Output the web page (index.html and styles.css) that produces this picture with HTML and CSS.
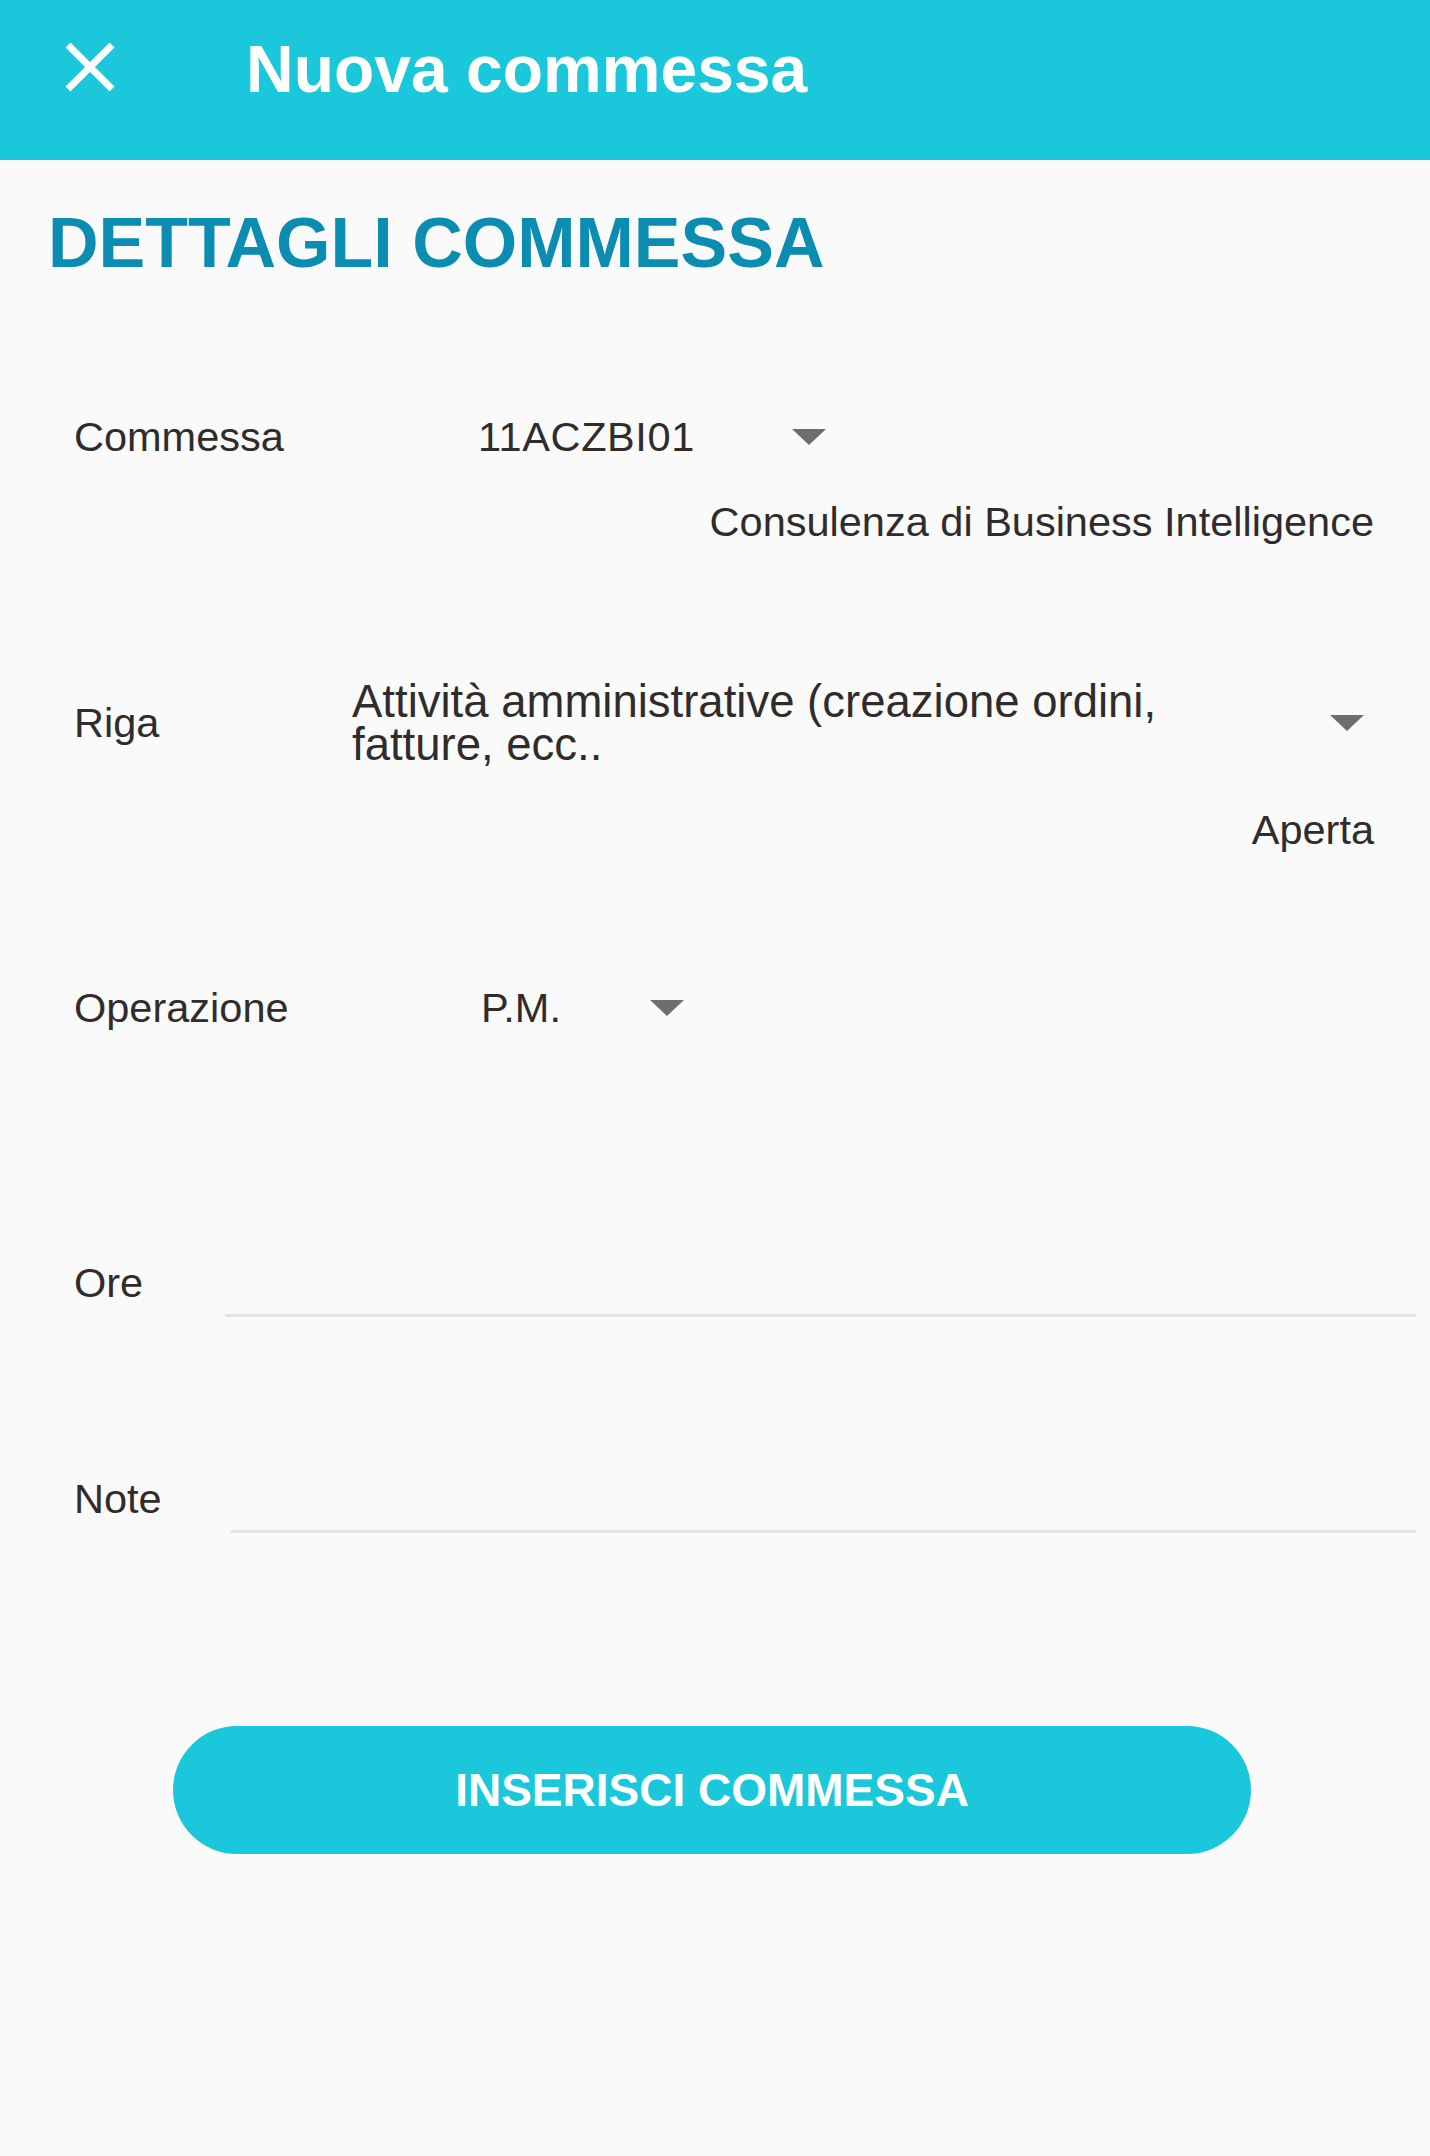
FILE: index.html
```html
<!DOCTYPE html>
<html lang="it">
<head>
<meta charset="utf-8">
<title>Nuova commessa</title>
<link rel="stylesheet" href="styles.css">
</head>
<body>
<header class="toolbar">
  <svg class="close-icon" viewBox="0 0 24 24" aria-hidden="true"><path d="M19 6.41L17.59 5 12 10.59 6.41 5 5 6.41 10.59 12 5 17.59 6.41 19 12 13.41 17.59 19 19 17.59 13.41 12z" fill="#fff"/></svg>
  <h1 class="toolbar-title">Nuova commessa</h1>
</header>
<main class="content">
  <h2 class="section-title">DETTAGLI COMMESSA</h2>

  <div class="row row-commessa">
    <span class="label label-commessa">Commessa</span>
    <span class="value value-commessa">11ACZBI01</span>
    <span class="caret"></span>
  </div>
  <div class="sub sub-commessa">Consulenza di Business Intelligence</div>

  <div class="row row-riga">
    <span class="label label-riga">Riga</span>
    <span class="value value-riga">Attività amministrative (creazione ordini, fatture, ecc..</span>
    <span class="caret caret-end"></span>
  </div>
  <div class="sub sub-riga">Aperta</div>

  <div class="row row-operazione">
    <span class="label label-operazione">Operazione</span>
    <span class="value value-operazione">P.M.</span>
    <span class="caret"></span>
  </div>

  <div class="row field row-ore">
    <span class="label label-ore">Ore</span>
    <span class="input input-ore"></span>
  </div>

  <div class="row field row-note">
    <span class="label label-note">Note</span>
    <span class="input input-note"></span>
  </div>

  <div class="actions">
    <button class="primary-btn">INSERISCI COMMESSA</button>
  </div>
</main>
</body>
</html>
```

FILE: styles.css
```css
html, body {
  margin: 0;
  padding: 0;
}
body {
  background: #fafafa;
  font-family: "Liberation Sans", Arial, Helvetica, sans-serif;
  color: #302c2c;
  width: 1430px;
  min-height: 2156px;
}
.toolbar {
  height: 160px;
  background: #1bc7da;
  display: flex;
  align-items: flex-start;
  box-sizing: border-box;
}
.close-icon {
  width: 84px;
  height: 84px;
  margin: 25px 0 0 48px;
  flex: none;
}
.toolbar-title {
  margin: 29px 0 0 114px;
  color: #fff;
  font-family: "Liberation Sans", Arial, Helvetica, sans-serif;
  font-size: 66px;
  font-weight: 700;
  line-height: 80px;
}
.section-title {
  margin: 48px 0 0 48px;
  font-family: "Liberation Sans", Arial, Helvetica, sans-serif;
  font-weight: 700;
  font-size: 70px;
  line-height: 70px;
  color: #0b8db2;
}
.row {
  display: flex;
  align-items: center;
  padding-left: 74px;
  font-size: 41.5px;
  line-height: 50px;
}
.label {
  flex: none;
}
.value {
  flex: none;
}
.caret {
  flex: none;
  width: 0;
  height: 0;
  border-left: 17px solid transparent;
  border-right: 17px solid transparent;
  border-top: 16px solid #6e6e6e;
}
.row-commessa {
  margin-top: 134px;
}
.label-commessa { width: 404px; }
.value-commessa {
  width: 314px;
  letter-spacing: 0.6px;
}
.sub {
  font-size: 41.5px;
  line-height: 50px;
  text-align: right;
  padding-right: 56px;
}
.sub-commessa { margin-top: 35px; }
.row-riga {
  margin-top: 133px;
  padding-right: 66px;
}
.label-riga { width: 278px; }
.value-riga {
  width: 880px;
  font-size: 45.5px;
  line-height: 43px;
}
.caret-end { margin-left: auto; }
.sub-riga { margin-top: 39px; }
.row-operazione { margin-top: 128px; }
.label-operazione { width: 407px; }
.value-operazione { width: 169px; }
.field {
  align-items: flex-start;
  padding-right: 14px;
}
.row-ore { margin-top: 225px; }
.row-note { margin-top: 157px; }
.input {
  flex: 1;
  height: 56px;
  border-bottom: 3px solid #e4e2e2;
}
.label-ore { width: 151px; }
.label-note { width: 157px; }
.actions {
  margin-top: 193px;
  padding-left: 173px;
}
.primary-btn {
  display: block;
  width: 1078px;
  height: 128px;
  border: none;
  border-radius: 64px;
  background: #1bc7da;
  color: #fff;
  font-family: "Liberation Sans", Arial, Helvetica, sans-serif;
  font-size: 46px;
  font-weight: 700;
  padding: 0;
}
```
